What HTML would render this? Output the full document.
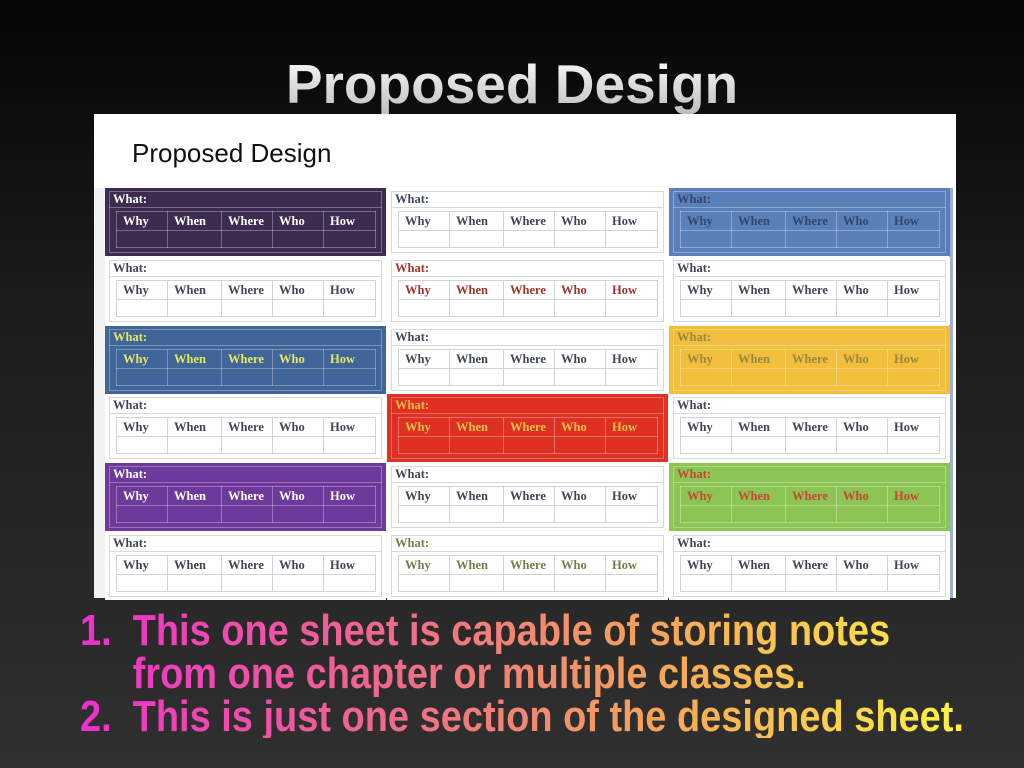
<!DOCTYPE html>
<html><head><meta charset="utf-8"><style>
*{margin:0;padding:0;box-sizing:border-box}
body{width:1024px;height:768px;overflow:hidden;background:linear-gradient(#050505,#1c1c1c 40%,#303030);position:relative;font-family:"Liberation Sans",sans-serif}
h1{position:absolute;top:52px;left:0;width:1024px;text-align:center;font-size:55px;font-weight:bold;letter-spacing:0;background:linear-gradient(#ffffff,#bdbdbd);-webkit-background-clip:text;background-clip:text;color:transparent}
.img{position:absolute;left:94px;top:114px;width:862px;height:484px;background:#fff}
.img .t{position:absolute;left:38px;top:24px;font-size:26px;color:#111}
.lstrip{position:absolute;left:94px;top:188px;width:11px;height:410px;background:#f2f2f2}
.rstrip{position:absolute;left:949px;top:188px;width:4px;height:410px;background:#9db0cc}
.c{position:absolute;width:281px;height:68px;font-family:"Liberation Serif",serif;font-weight:bold;font-size:12.5px;color:#3f4658}
.c .f{position:absolute;left:4px;top:3px;right:4px;bottom:3px;border:1px solid #d8d8d8}
.c .w{position:absolute;left:8px;top:4px}
.c .hl{position:absolute;left:4px;top:19px;right:4px;border-top:1px solid #d8d8d8}
.c table{position:absolute;left:11px;top:23px;width:260px;border-collapse:collapse}
.c td{border:1px solid #d3d3d3;height:19px;padding:0 0 0 6px;font-size:12.5px}
.c tr+tr td{height:17px}
.c td:nth-child(1){width:51px}.c td:nth-child(2){width:54px}.c td:nth-child(3){width:51px}.c td:nth-child(4){width:51px}
.fill .f,.fill td,.fill .hl{border-color:rgba(255,255,255,.3)}
.bl{position:absolute;left:80px;top:609px;width:1030px;font-size:44px;font-weight:bold;line-height:43px;transform:scaleX(0.863);transform-origin:0 0;background:linear-gradient(90deg,#ee2fcf,#f06a8a 35%,#f5a45a 65%,#fbd24c 85%,#fdf542 100%);-webkit-background-clip:text;background-clip:text;color:transparent}
.bl span{display:inline-block;width:61px}
</style></head><body>
<h1>Proposed Design</h1>
<div class="img"><div class="t">Proposed Design</div></div>
<div class="lstrip"></div><div class="rstrip"></div>

<div class="c fill" style="left:105px;top:188px;background:#3e2b50;color:#fff"><div class="f"></div><div class="w">What:</div><div class="hl"></div><table><tr><td>Why</td><td>When</td><td>Where</td><td>Who</td><td>How</td></tr><tr><td></td><td></td><td></td><td></td><td></td></tr></table></div>
<div class="c" style="left:387px;top:188px;background:#fff"><div class="f"></div><div class="w">What:</div><div class="hl"></div><table><tr><td>Why</td><td>When</td><td>Where</td><td>Who</td><td>How</td></tr><tr><td></td><td></td><td></td><td></td><td></td></tr></table></div>
<div class="c fill" style="left:669px;top:188px;background:#5a80ba;color:#34456b"><div class="f"></div><div class="w">What:</div><div class="hl"></div><table><tr><td>Why</td><td>When</td><td>Where</td><td>Who</td><td>How</td></tr><tr><td></td><td></td><td></td><td></td><td></td></tr></table></div>

<div class="c" style="left:105px;top:257px;background:#fff"><div class="f"></div><div class="w">What:</div><div class="hl"></div><table><tr><td>Why</td><td>When</td><td>Where</td><td>Who</td><td>How</td></tr><tr><td></td><td></td><td></td><td></td><td></td></tr></table></div>
<div class="c" style="left:387px;top:257px;background:#fff;color:#a0342c"><div class="f"></div><div class="w">What:</div><div class="hl"></div><table><tr><td>Why</td><td>When</td><td>Where</td><td>Who</td><td>How</td></tr><tr><td></td><td></td><td></td><td></td><td></td></tr></table></div>
<div class="c" style="left:669px;top:257px;background:#fff"><div class="f"></div><div class="w">What:</div><div class="hl"></div><table><tr><td>Why</td><td>When</td><td>Where</td><td>Who</td><td>How</td></tr><tr><td></td><td></td><td></td><td></td><td></td></tr></table></div>

<div class="c fill" style="left:105px;top:326px;background:#3f6599;color:#e8e85a"><div class="f"></div><div class="w">What:</div><div class="hl"></div><table><tr><td>Why</td><td>When</td><td>Where</td><td>Who</td><td>How</td></tr><tr><td></td><td></td><td></td><td></td><td></td></tr></table></div>
<div class="c" style="left:387px;top:326px;background:#fff"><div class="f"></div><div class="w">What:</div><div class="hl"></div><table><tr><td>Why</td><td>When</td><td>Where</td><td>Who</td><td>How</td></tr><tr><td></td><td></td><td></td><td></td><td></td></tr></table></div>
<div class="c fill" style="left:669px;top:326px;background:#f1bf3c;color:#9c8740"><div class="f"></div><div class="w">What:</div><div class="hl"></div><table><tr><td>Why</td><td>When</td><td>Where</td><td>Who</td><td>How</td></tr><tr><td></td><td></td><td></td><td></td><td></td></tr></table></div>

<div class="c" style="left:105px;top:394px;background:#fff"><div class="f"></div><div class="w">What:</div><div class="hl"></div><table><tr><td>Why</td><td>When</td><td>Where</td><td>Who</td><td>How</td></tr><tr><td></td><td></td><td></td><td></td><td></td></tr></table></div>
<div class="c fill" style="left:387px;top:394px;background:#de3023;color:#f2c244"><div class="f"></div><div class="w">What:</div><div class="hl"></div><table><tr><td>Why</td><td>When</td><td>Where</td><td>Who</td><td>How</td></tr><tr><td></td><td></td><td></td><td></td><td></td></tr></table></div>
<div class="c" style="left:669px;top:394px;background:#fff"><div class="f"></div><div class="w">What:</div><div class="hl"></div><table><tr><td>Why</td><td>When</td><td>Where</td><td>Who</td><td>How</td></tr><tr><td></td><td></td><td></td><td></td><td></td></tr></table></div>

<div class="c fill" style="left:105px;top:463px;background:#6d3a9c;color:#fff"><div class="f"></div><div class="w">What:</div><div class="hl"></div><table><tr><td>Why</td><td>When</td><td>Where</td><td>Who</td><td>How</td></tr><tr><td></td><td></td><td></td><td></td><td></td></tr></table></div>
<div class="c" style="left:387px;top:463px;background:#fff"><div class="f"></div><div class="w">What:</div><div class="hl"></div><table><tr><td>Why</td><td>When</td><td>Where</td><td>Who</td><td>How</td></tr><tr><td></td><td></td><td></td><td></td><td></td></tr></table></div>
<div class="c fill" style="left:669px;top:463px;background:#8cc553;color:#c84538"><div class="f"></div><div class="w">What:</div><div class="hl"></div><table><tr><td>Why</td><td>When</td><td>Where</td><td>Who</td><td>How</td></tr><tr><td></td><td></td><td></td><td></td><td></td></tr></table></div>

<div class="c" style="left:105px;top:532px;background:#fff"><div class="f"></div><div class="w">What:</div><div class="hl"></div><table><tr><td>Why</td><td>When</td><td>Where</td><td>Who</td><td>How</td></tr><tr><td></td><td></td><td></td><td></td><td></td></tr></table></div>
<div class="c" style="left:387px;top:532px;background:#fff;color:#7d7a4a"><div class="f"></div><div class="w">What:</div><div class="hl"></div><table><tr><td>Why</td><td>When</td><td>Where</td><td>Who</td><td>How</td></tr><tr><td></td><td></td><td></td><td></td><td></td></tr></table></div>
<div class="c" style="left:669px;top:532px;background:#fff"><div class="f"></div><div class="w">What:</div><div class="hl"></div><table><tr><td>Why</td><td>When</td><td>Where</td><td>Who</td><td>How</td></tr><tr><td></td><td></td><td></td><td></td><td></td></tr></table></div>

<div class="bl">
<div><span>1.</span>This one sheet is capable of storing notes</div>
<div style="padding-left:61px">from one chapter or multiple classes.</div>
<div><span>2.</span>This is just one section of the designed sheet.</div>
</div>
</body></html>
